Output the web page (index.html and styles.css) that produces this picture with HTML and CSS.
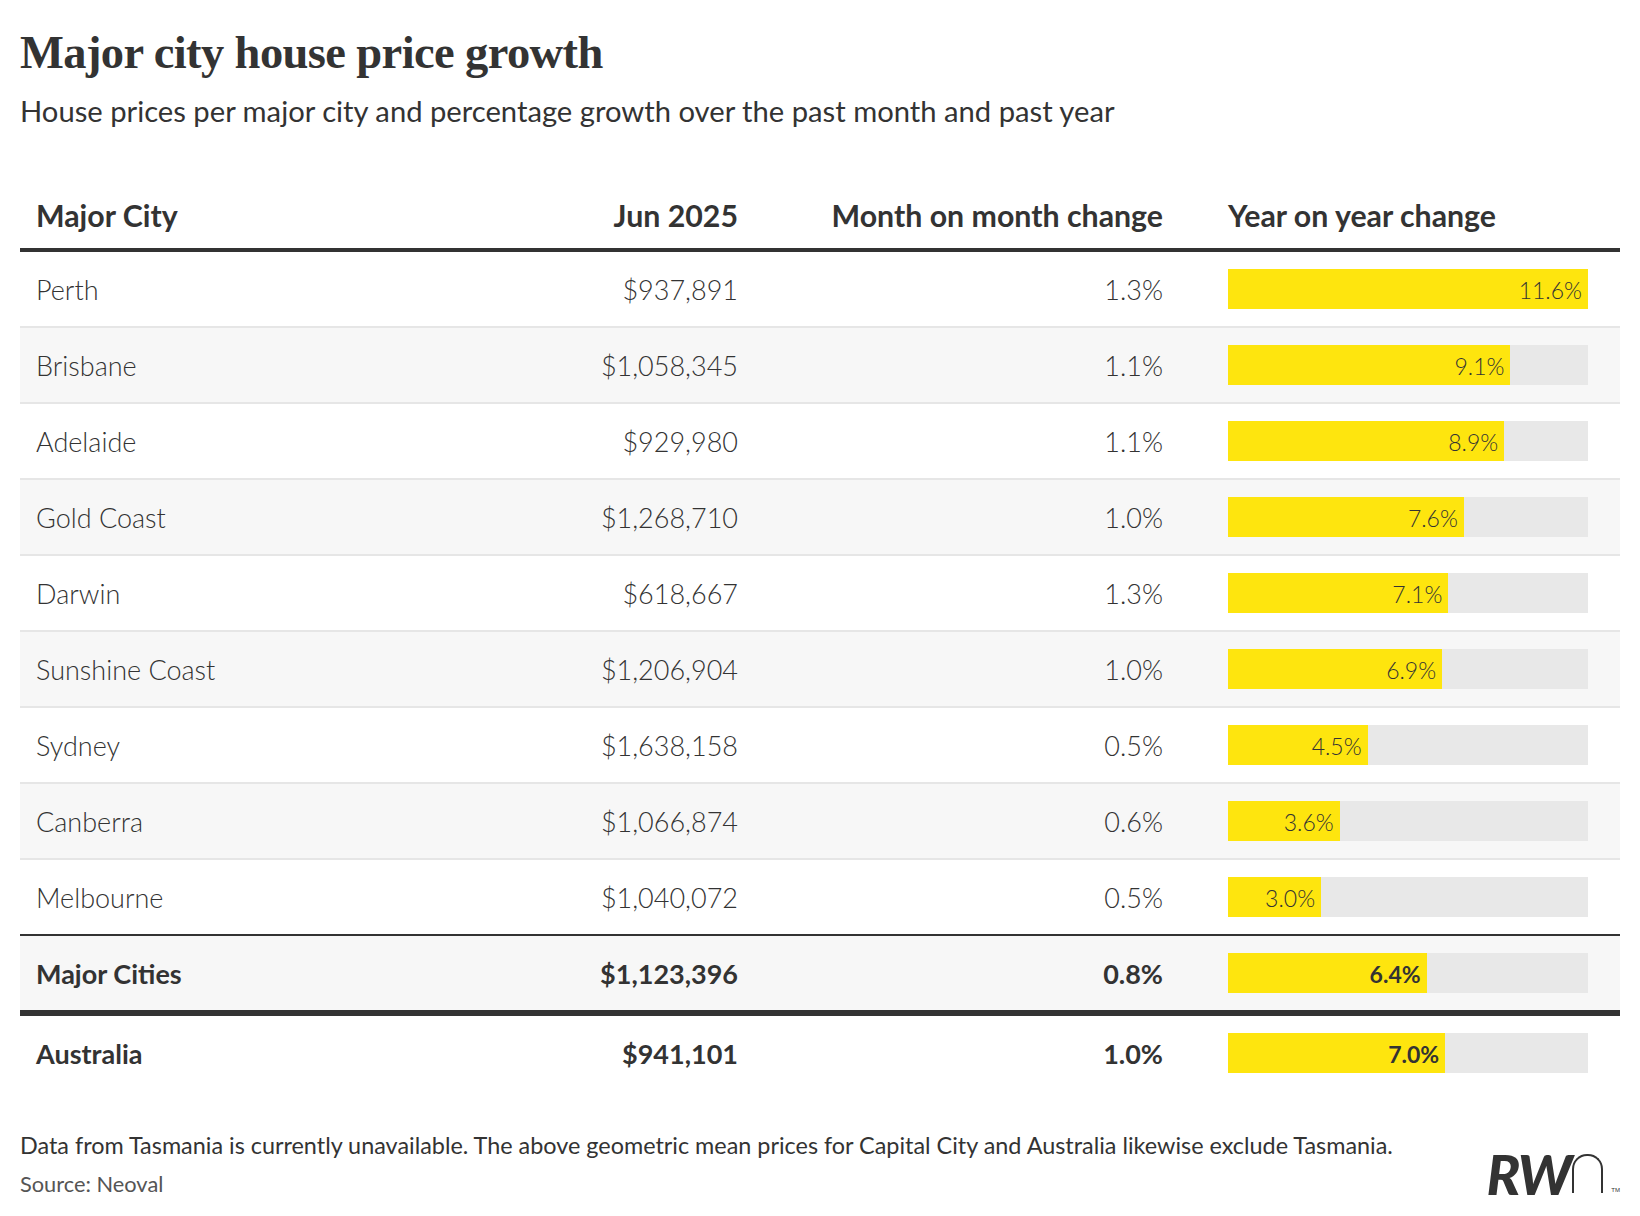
FILE: index.html
```html
<!DOCTYPE html>
<html lang="en">
<head>
<meta charset="utf-8">
<title>Major city house price growth</title>
<link rel="stylesheet" href="styles.css">
</head>
<body>
<div class="page">
  <h1 class="title">Major city house price growth</h1>
  <p class="subtitle">House prices per major city and percentage growth over the past month and past year</p>

  <div class="table">
    <div class="row head">
      <div class="c-city">Major City</div>
      <div class="c-price">Jun 2025</div>
      <div class="c-mom">Month on month change</div>
      <div class="c-yoy">Year on year change</div>
    </div>

    <div class="row">
      <div class="c-city">Perth</div>
      <div class="c-price">$937,891</div>
      <div class="c-mom">1.3%</div>
      <div class="c-yoy"><div class="track"><div class="fill" style="width:100%"><span>11.6%</span></div></div></div>
    </div>
    <div class="row alt">
      <div class="c-city">Brisbane</div>
      <div class="c-price">$1,058,345</div>
      <div class="c-mom">1.1%</div>
      <div class="c-yoy"><div class="track"><div class="fill" style="width:78.45%"><span>9.1%</span></div></div></div>
    </div>
    <div class="row">
      <div class="c-city">Adelaide</div>
      <div class="c-price">$929,980</div>
      <div class="c-mom">1.1%</div>
      <div class="c-yoy"><div class="track"><div class="fill" style="width:76.72%"><span>8.9%</span></div></div></div>
    </div>
    <div class="row alt">
      <div class="c-city">Gold Coast</div>
      <div class="c-price">$1,268,710</div>
      <div class="c-mom">1.0%</div>
      <div class="c-yoy"><div class="track"><div class="fill" style="width:65.52%"><span>7.6%</span></div></div></div>
    </div>
    <div class="row">
      <div class="c-city">Darwin</div>
      <div class="c-price">$618,667</div>
      <div class="c-mom">1.3%</div>
      <div class="c-yoy"><div class="track"><div class="fill" style="width:61.21%"><span>7.1%</span></div></div></div>
    </div>
    <div class="row alt">
      <div class="c-city">Sunshine Coast</div>
      <div class="c-price">$1,206,904</div>
      <div class="c-mom">1.0%</div>
      <div class="c-yoy"><div class="track"><div class="fill" style="width:59.48%"><span>6.9%</span></div></div></div>
    </div>
    <div class="row">
      <div class="c-city">Sydney</div>
      <div class="c-price">$1,638,158</div>
      <div class="c-mom">0.5%</div>
      <div class="c-yoy"><div class="track"><div class="fill" style="width:38.79%"><span>4.5%</span></div></div></div>
    </div>
    <div class="row alt">
      <div class="c-city">Canberra</div>
      <div class="c-price">$1,066,874</div>
      <div class="c-mom">0.6%</div>
      <div class="c-yoy"><div class="track"><div class="fill" style="width:31.03%"><span>3.6%</span></div></div></div>
    </div>
    <div class="row last">
      <div class="c-city">Melbourne</div>
      <div class="c-price">$1,040,072</div>
      <div class="c-mom">0.5%</div>
      <div class="c-yoy"><div class="track"><div class="fill" style="width:25.86%"><span>3.0%</span></div></div></div>
    </div>

    <div class="row total alt">
      <div class="c-city">Major Cities</div>
      <div class="c-price">$1,123,396</div>
      <div class="c-mom">0.8%</div>
      <div class="c-yoy"><div class="track"><div class="fill" style="width:55.17%"><span>6.4%</span></div></div></div>
    </div>
    <div class="row total final">
      <div class="c-city">Australia</div>
      <div class="c-price">$941,101</div>
      <div class="c-mom">1.0%</div>
      <div class="c-yoy"><div class="track"><div class="fill" style="width:60.34%"><span>7.0%</span></div></div></div>
    </div>
  </div>

  <div class="footer">
    <div class="notes">
      <p class="note">Data from Tasmania is currently unavailable. The above geometric mean prices for Capital City and Australia likewise exclude Tasmania.</p>
      <p class="source">Source: Neoval</p>
    </div>
    <div class="logo" aria-label="RWn">
      <span class="logo-rw">RW</span>
      <span class="logo-n"></span>
      <span class="logo-tm">TM</span>
    </div>
  </div>
</div>
</body>
</html>
```

FILE: styles.css
```css
html, body {
  margin: 0;
  padding: 0;
  background: #ffffff;
}

body {
  font-family: Lato, "Open Sans", "Liberation Sans", sans-serif;
  color: #333333;
}

.page {
  width: 1600px;
  padding: 0 20px;
}

.title {
  margin: 25px 0 0 0;
  font-family: "Liberation Serif", "DejaVu Serif", serif;
  font-weight: 700;
  font-size: 46.5px;
  line-height: 55px;
  letter-spacing: -0.6px;
  color: #333333;
}

.subtitle {
  margin: 14px 0 0 0;
  font-size: 29.2px;
  line-height: 1.15;
  font-weight: 400;
  color: #333333;
}

.table {
  margin-top: 66px;
}

.row {
  display: grid;
  grid-template-columns: 401px 301px 425px 424px;
  padding: 0 32px 0 16px;
  align-items: center;
  height: 74px;
  border-bottom: 2px solid #e6e6e6;
  font-size: 27px;
  line-height: 1.2;
  font-weight: 300;
  color: #333333;
}

.row > div {
  padding-top: 3px;
}

.row.alt {
  background: #f7f7f7;
}

.row.head {
  height: auto;
  align-items: end;
  padding-bottom: 15px;
  border-bottom: 4px solid #333333;
  font-size: 30.3px;
  font-weight: 700;
}

.row.last {
  border-bottom: 2px solid #333333;
}

.row.total {
  font-weight: 700;
  border-bottom: 6px solid #333333;
}

.row.final {
  border-bottom: none;
}

.c-city {
  text-align: left;
}

.c-price,
.c-mom {
  text-align: right;
}

.row > .c-yoy {
  padding-left: 65px;
  padding-top: 0;
}

.row.head > .c-yoy {
  padding-top: 3px;
}

.track {
  width: 360px;
  height: 40px;
  background: #e8e8e8;
}

.fill {
  height: 100%;
  background: #fee50e;
  display: flex;
  align-items: center;
  justify-content: flex-end;
  box-sizing: border-box;
  padding-right: 6px;
  padding-top: 3px;
}

.fill span {
  font-size: 23px;
  line-height: 1;
  color: #333333;
  white-space: nowrap;
}

.footer {
  margin-top: 41px;
  display: flex;
  justify-content: space-between;
  align-items: flex-end;
}

.note {
  margin: 0;
  font-size: 23.4px;
  line-height: 1.2;
  color: #333333;
}

.source {
  margin: 12px 0 0 0;
  font-size: 21.8px;
  line-height: 1.2;
  color: #555555;
}

.logo {
  display: flex;
  align-items: flex-end;
  height: 38px;
  margin-bottom: 4px;
  color: #333333;
}

.logo-rw {
  font-family: Lato, "Liberation Sans", sans-serif;
  font-weight: 900;
  font-style: italic;
  font-size: 56px;
  line-height: 38px;
  height: 38px;
  letter-spacing: -2px;
}

.logo-n {
  width: 27px;
  height: 37px;
  margin-left: 2px;
  border: 2px solid #333333;
  border-bottom: none;
  border-radius: 15px 15px 0 0;
}

.logo-tm {
  font-family: "Liberation Sans", sans-serif;
  font-size: 6px;
  line-height: 6px;
  margin-left: 8px;
}
```
